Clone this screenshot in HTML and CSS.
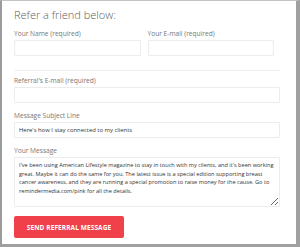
FILE: index.html
```html
<!DOCTYPE html>
<html>

<head>
	<title>Refer a friend</title>
	<link rel="stylesheet" href="styles.css">
</head>

<body>
	<div class="frame">
		<form class="refer">
			<h2>Refer a friend below:</h2>

			<div class="row">
				<label class="field">
					<span>Your Name (required)</span>
					<input type="text">
				</label>
				<label class="field">
					<span>Your E-mail (required)</span>
					<input type="text">
				</label>
			</div>

			<hr>

			<label class="field wide">
				<span>Referral's E-mail (required)</span>
				<input type="text">
			</label>

			<label class="field wide">
				<span>Message Subject Line</span>
				<input type="text" value="Here's how I stay connected to my clients">
			</label>

			<label class="field wide">
				<span>Your Message</span>
				<textarea>I've been using American Lifestyle magazine to stay in touch with my clients, and it's been working great. Maybe it can do the same for you. The latest issue is a special edition supporting breast cancer awareness, and they are running a special promotion to raise money for the cause. Go to remindermedia.com/pink for all the details.</textarea>
			</label>

			<button type="button">SEND REFERRAL MESSAGE</button>
		</form>
	</div>
</body>

</html>
```

FILE: styles.css
```css
body {
	margin: 0;
	font-family: "Open Sans", sans-serif;
}

.frame {
	width: 300px;
	height: 247px;
	box-sizing: border-box;
	border-left: 2px solid #9c9c9c;
	border-top: 1px solid #c4c4c4;
	border-right: 4px solid #a0a0a0;
	border-bottom: 3px solid #a0a0a0;
	background-color: #fff;
	overflow: hidden;
}

.refer {
	padding: 6px 16px 0 12px;
	display: flex;
	flex-direction: column;
}

h2 {
	margin: 0 0 7px;
	font-size: 11px;
	font-weight: 300;
	color: #5c5c5c;
	line-height: 16px;
}

.row {
	display: flex;
	gap: 7px;
	padding-right: 6px;
}

.row>.field {
	flex: 1;
}

.field {
	display: flex;
	flex-direction: column;
}

.field>span {
	font-size: 6.6px;
	color: #777;
	line-height: 8px;
	margin-bottom: 2px;
}

input,
textarea {
	box-sizing: border-box;
	border: 1px solid #ececec;
	border-radius: 1px;
	font-family: "Open Sans", sans-serif;
	color: #333;
	outline: none;
	padding: 0 4px;
}

input {
	height: 16px;
	font-size: 5.9px;
}

textarea {
	height: 50px;
	padding: 3px 4px;
	font-size: 5.6px;
	line-height: 8.5px;
	resize: vertical;
}

hr {
	border: 0;
	border-top: 1px solid #efefef;
	margin: 14px 0 6px;
}

.wide {
	margin-bottom: 9px;
}

button {
	align-self: flex-start;
	width: 110px;
	height: 22px;
	border: 0;
	border-radius: 2px;
	background-color: #f0404a;
	color: #fff;
	font-family: "Open Sans", sans-serif;
	font-weight: 700;
	font-size: 6.5px;
	letter-spacing: 0.1px;
}
```
